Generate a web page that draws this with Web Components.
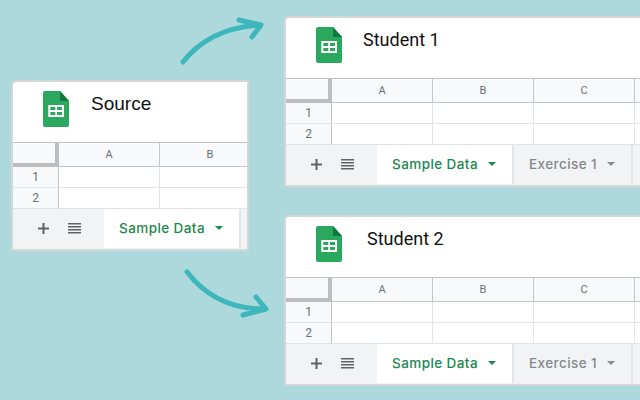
<!DOCTYPE html>
<html>
<head>
<meta charset="utf-8">
<style>
  html, body { margin: 0; height: 100%; overflow: hidden; }
  body { background: #aed9dc; font-family: Roboto, "Liberation Sans", sans-serif; }
  main { position: relative; width: 640px; height: 400px; overflow: hidden; }
  sheet-window.source { left: 11px; top: 80px; width: 238px; }
  sheet-window.one { left: 284px; top: 16px; width: 400px; }
  sheet-window.two { left: 284px; top: 215px; width: 400px; }
  .arrows { position: absolute; left: 0; top: 0; }
</style>
</head>
<body>
<main>
  <svg class="arrows" width="640" height="400" fill="none" stroke="#3db6bc" stroke-width="5" stroke-linecap="round" stroke-linejoin="round">
    <path d="M183 62C201 39 228 27 260 25"/>
    <path d="M239 20L261 25L252 37"/>
    <path d="M187 272C204 294 228 309 264 309"/>
    <path d="M256 297L266 309L243 315"/>
  </svg>
  <sheet-window class="source" heading="Source" heading-left="79" heading-font="Liberation Sans" heading-size="19">
    <sheet-grid columns="A,B"></sheet-grid>
    <sheet-tabs>
      <sheet-tab active>Sample Data</sheet-tab>
    </sheet-tabs>
  </sheet-window>
  <sheet-window class="one" heading="Student 1" heading-left="78">
    <sheet-grid columns="A,B,C,"></sheet-grid>
    <sheet-tabs>
      <sheet-tab active>Sample Data</sheet-tab>
      <sheet-tab>Exercise 1</sheet-tab>
    </sheet-tabs>
  </sheet-window>
  <sheet-window class="two" heading="Student 2" heading-left="82">
    <sheet-grid columns="A,B,C,"></sheet-grid>
    <sheet-tabs>
      <sheet-tab active>Sample Data</sheet-tab>
      <sheet-tab>Exercise 1</sheet-tab>
    </sheet-tabs>
  </sheet-window>
</main>

<script>
class SheetWindow extends HTMLElement {
  connectedCallback() {
    const left = this.getAttribute("heading-left");
    const font = this.getAttribute("heading-font") || "Roboto";
    const size = this.getAttribute("heading-size") || 18;
    this.attachShadow({ mode: "open" }).innerHTML = `
      <style>
        :host {
          position: absolute;
          display: block;
          box-sizing: border-box;
          height: 171px;
          background: #fff;
          border: 2px solid #d4d6d7;
          border-top-left-radius: 5px;
          overflow: hidden;
        }
        header { position: relative; height: 60px; border-bottom: 1px solid #c4c4c4; }
        svg { position: absolute; left: 30px; top: 9px; }
        h1 {
          position: absolute;
          left: ${left - 1}px;
          top: 10px;
          margin: 0;
          font: 400 ${size}px/24px "${font}", sans-serif;
          color: #111;
        }
      </style>
      <header>
        <svg width="26" height="36" viewBox="0 0 26 36">
          <path d="M2 0H17L26 10V34a2 2 0 0 1-2 2H2a2 2 0 0 1-2-2V2a2 2 0 0 1 2-2Z" fill="#2aa85e"/>
          <path d="M17 0L26 10H17Z" fill="#0f7a3d"/>
          <path d="M5.300 14H21V26H5.300ZM7.300 16V19H12.300V16ZM14 16V19H19V16ZM7.300 21V24H12.300V21ZM14 21V24H19V21Z" fill="#fff" fill-rule="evenodd"/>
        </svg>
        <h1>${this.getAttribute("heading")}</h1>
      </header>
      <slot></slot>`;
  }
}

class SheetGrid extends HTMLElement {
  connectedCallback() {
    const cols = this.getAttribute("columns").split(",");
    const colCells = cols.map(c => `<div class="head">${c}</div>`).join("");
    const row = n => `<div class="num">${n}</div>` + cols.map(() => `<div class="cell"></div>`).join("");
    this.attachShadow({ mode: "open" }).innerHTML = `
      <style>
        :host { display: block; }
        .grid {
          display: grid;
          grid-template-columns: 46px repeat(${cols.length}, 101px);
          grid-template-rows: 24px 21px 21px;
          font: 400 11px Roboto, sans-serif;
          color: #6b6f74;
        }
        .grid > div { display: flex; align-items: center; justify-content: center; box-sizing: border-box; }
        .corner { background: #f8f9fa; border-right: 4px solid #bdbdbd; border-bottom: 4px solid #bdbdbd; }
        .head { background: #f8f9fa; border-right: 1px solid #c4c4c4; border-bottom: 1px solid #c4c4c4; }
        .num { background: #f8f9fa; border-right: 1px solid #c4c4c4; border-bottom: 1px solid #e2e3e3; font-size: 12px; }
        .cell { border-right: 1px solid #e2e3e3; border-bottom: 1px solid #e2e3e3; }
      </style>
      <div class="grid"><div class="corner"></div>${colCells}${row(1)}${row(2)}</div>`;
  }
}

class SheetTabs extends HTMLElement {
  constructor() {
    super();
    this.attachShadow({ mode: "open" }).innerHTML = `
      <style>
        :host { display: flex; height: 40px; background: #f1f3f4; }
        .tools { display: flex; align-items: center; width: 91px; height: 38px; flex: none; box-sizing: border-box; padding-left: 25px; gap: 19px; }
        svg { display: block; }
        .tabs { display: flex; flex: 1; }
      </style>
      <div class="tools">
        <svg width="11" height="11" viewBox="0 0 11 11"><path d="M4.500 0H6.500V4.500H11V6.500H6.500V11H4.500V6.500H0V4.500H4.500Z" fill="#5f6368"/></svg>
        <svg width="13" height="11" viewBox="0 0 13 11" fill="#5f6368"><path d="M0 0H13V1.500H0ZM0 3H13V4.500H0ZM0 6H13V7.500H0ZM0 9H13V10.500H0Z"/></svg>
      </div>
      <div class="tabs"><slot></slot></div>`;
  }
}

class SheetTab extends HTMLElement {
  constructor() {
    super();
    this.attachShadow({ mode: "open" }).innerHTML = `
      <style>
        :host {
          display: flex;
          align-items: center;
          box-sizing: border-box;
          height: 39px;
          padding: 0 16px 1px 15px;
          gap: 10px;
          border-right: 2px solid #e3e4e6;
          font: 500 13.500px Inter, Roboto, sans-serif;
          letter-spacing: .42px;
          color: #85888c;
        }
        :host([active]) { background: #fff; color: #1a8a4c; }
        i { width: 0; height: 0; border: 4px solid transparent; border-top: 4px solid currentColor; border-bottom: 0; }
      </style>
      <slot></slot><i></i>`;
  }
}

customElements.define("sheet-window", SheetWindow);
customElements.define("sheet-grid", SheetGrid);
customElements.define("sheet-tabs", SheetTabs);
customElements.define("sheet-tab", SheetTab);
</script>
</body>
</html>
